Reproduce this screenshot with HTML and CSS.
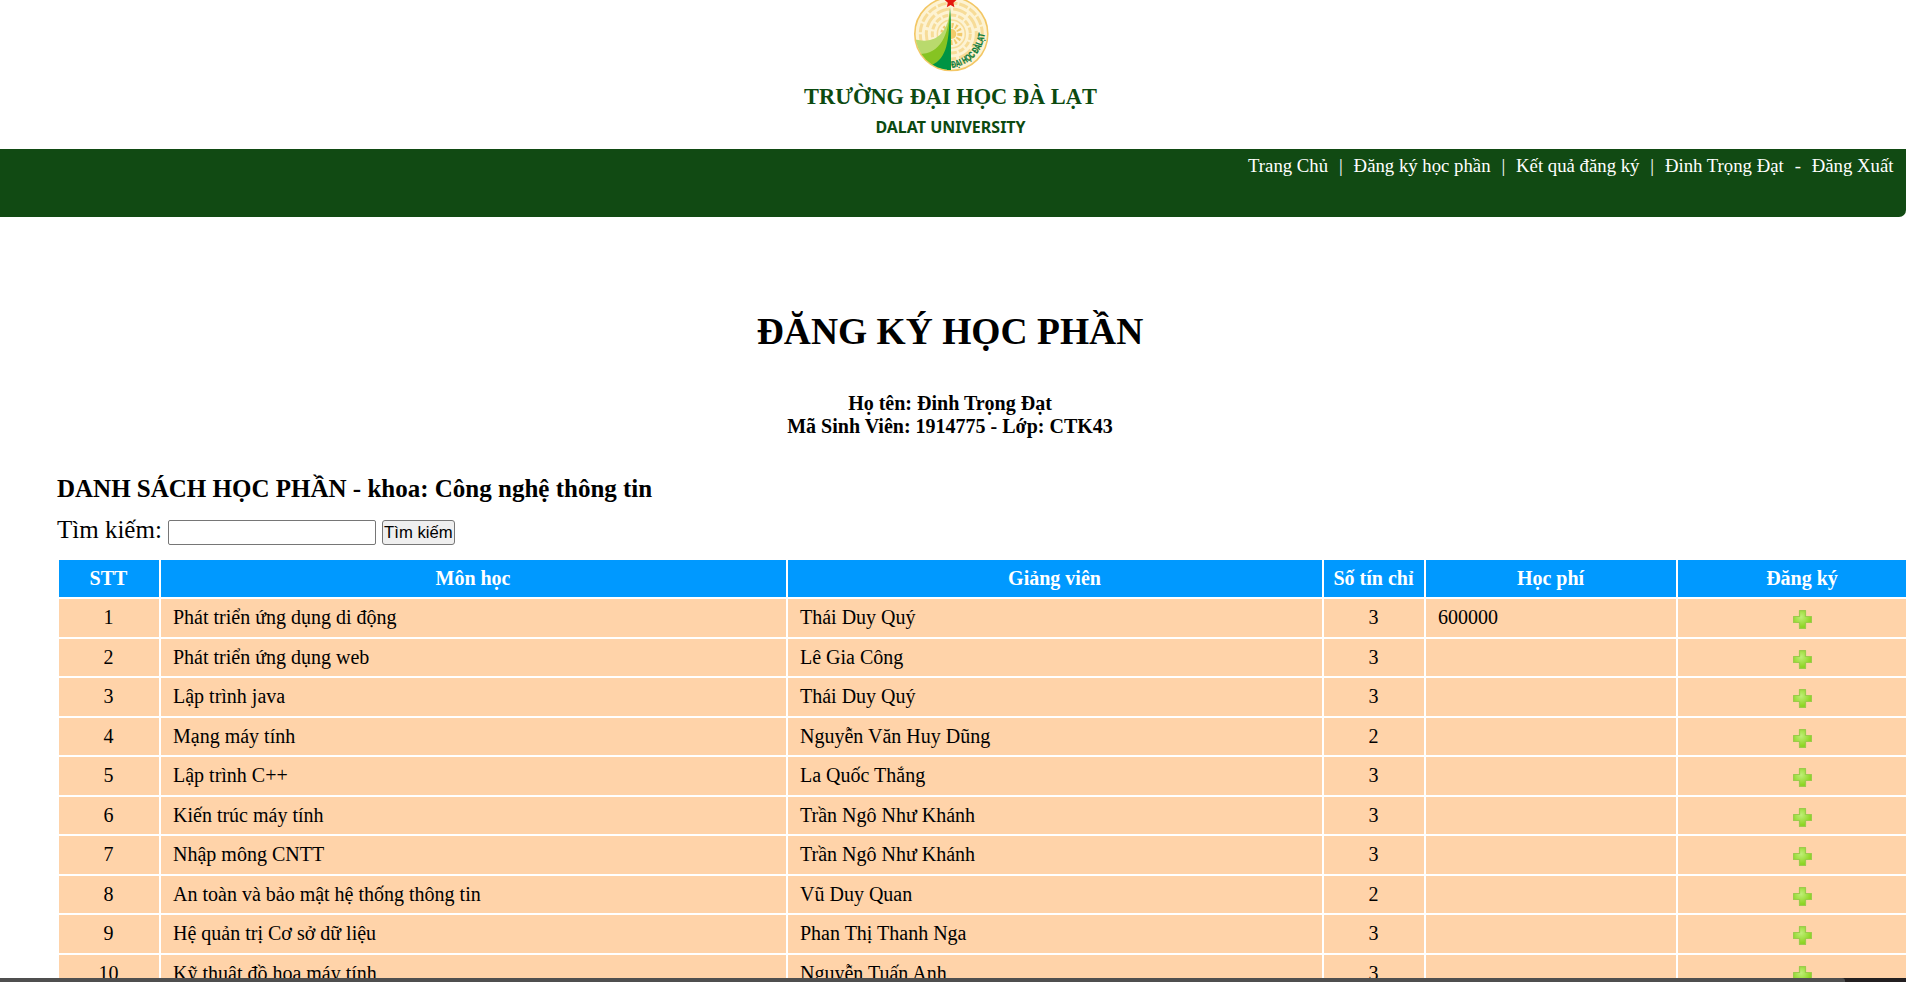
FILE: index.html
```
<!DOCTYPE html>
<html lang="vi">
<head>
<meta charset="utf-8">
<title>Đăng ký học phần</title>
<link rel="stylesheet" href="styles.css">
</head>
<body>
<header class="banner">
  <svg class="logo" width="76" height="72" viewBox="912 0 76 72">
    <defs>
      <clipPath id="disc"><circle cx="950.3" cy="34" r="36"/></clipPath>
      <path id="arc" d="M951 68 C 969 65 983 52 984.5 29"/>
    </defs>
    <circle cx="950.3" cy="34" r="36.5" fill="#fdf3d3" stroke="#f3c765" stroke-width="1.6"/>
    <g fill="none" stroke="#f7dc98">
      <circle cx="950.3" cy="34" r="31" stroke-width="3" stroke-dasharray="9 2"/>
      <circle cx="950.3" cy="34" r="25" stroke-width="3" stroke-dasharray="14 3"/>
      <circle cx="950.3" cy="34" r="19" stroke-width="3" stroke-dasharray="6 2"/>
      <circle cx="950.3" cy="34" r="14" stroke-width="1.5"/>
      <circle cx="950.3" cy="34" r="8.5" stroke="#f2ca6c" stroke-width="5" stroke-dasharray="2 2"/>
    </g>
    <circle cx="950.3" cy="34" r="5" fill="#f3cb6a"/>
    <g clip-path="url(#disc)">
      <path d="M949 8 C948 30 937 46 912 39 V72 H950Z" fill="#b9da6d"/>
      <path d="M949 8 C948 36 939 54 918 54 V72 H950Z" fill="#86c322"/>
      <path d="M949 8 C948 42 946 58 931 65 V72 H950Z" fill="#009444"/>
    </g>
    <path d="M949.6 7 L948 40 L946 70 H950Z" fill="#009444"/>
    <path d="M949.6 -4 l1.7 3.6 4.2 .4 -3.1 2.8 1 4.5 -3.8 -2.4 -3.8 2.4 1 -4.5 -3.1 -2.8 4.2 -.4Z" fill="#e3170d"/>
    <text class="logo-text"><textPath href="#arc" textLength="51" lengthAdjust="spacingAndGlyphs">ĐẠI HỌC ĐÀLẠT</textPath></text>
  </svg>
  <div class="school">TRƯỜNG ĐẠI HỌC ĐÀ LẠT</div>
  <div class="school-en">DALAT UNIVERSITY</div>
</header>
<nav class="menu">
  <a>Trang Chủ</a><span>|</span><a>Đăng ký học phần</a><span>|</span><a>Kết quả đăng ký</a><span>|</span><a>Đinh Trọng Đạt</a><span class="dash">-</span><a>Đăng Xuất</a>
</nav>
<main>
  <h1>ĐĂNG KÝ HỌC PHẦN</h1>
  <div class="student">Họ tên: Đinh Trọng Đạt<br>Mã Sinh Viên: 1914775 - Lớp: CTK43</div>
  <h2>DANH SÁCH HỌC PHẦN - khoa: Công nghệ thông tin</h2>
  <form class="search"><label for="q">Tìm kiếm:</label><input id="q" type="text"><button type="button">Tìm kiếm</button></form>
  <div class="grid" id="courses">
    <div class="th">STT</div><div class="th">Môn học</div><div class="th">Giảng viên</div><div class="th">Số tín chỉ</div><div class="th">Học phí</div><div class="th">Đăng ký</div>
  </div>
</main>
<div class="scrollbar"><div class="thumb"></div></div>
<svg width="0" height="0" class="defs">
  <defs>
    <radialGradient id="green" cx=".42" cy=".36" r=".62"><stop offset="0" stop-color="#c0ee78"/><stop offset="1" stop-color="#88d31a"/></radialGradient>
    <symbol id="plus" viewBox="0 0 19 19"><path d="M6.5 .6h6v5.9h5.9v6h-5.9v5.9h-6v-5.9H.6v-6h5.9Z" fill="url(#green)" stroke="#9ccb4c" stroke-width="1.2" stroke-linejoin="round"/></symbol>
  </defs>
</svg>
<script src="app.js"></script>
</body>
</html>
```
FILE: styles.css
```
html, body { height: 100%; }
body { margin: 0; height: 982px; overflow: hidden; position: relative; background: #fff; color: #000; font-family: "Liberation Serif", "Times New Roman", serif; }
.banner { height: 149px; display: flex; flex-direction: column; align-items: center; padding-right: 5px; box-sizing: border-box; }
.logo { display: block; flex: none; }
.logo-text { font: bold 9.5px "Liberation Sans", Arial, sans-serif; fill: #0b7a3b; stroke: #0b7a3b; stroke-width: .3px; }
.school { margin-top: 11px; font-size: 22.4px; line-height: 28px; font-weight: bold; color: #0c4a10; white-space: nowrap; }
.school-en { margin-top: 6px; font: bold 16px/20px "Noto Sans", sans-serif; color: #0c4a10; white-space: nowrap; }
.menu { height: 68px; box-sizing: border-box; padding: 6px 12.5px 0 0; display: flex; justify-content: flex-end; align-items: flex-start; background: #114a13; border-bottom-right-radius: 7px; color: #fff; font-size: 18.75px; line-height: 22px; white-space: nowrap; }
.menu span { width: 25.5px; text-align: center; }
.menu .dash { width: 28px; }
main { padding-left: 57px; }
h1 { margin: 92px 0 0 -57px; padding-right: 6px; text-align: center; font-size: 37.5px; line-height: 46px; }
.student { margin: 37px 0 0 -57px; padding-right: 6px; text-align: center; font-weight: bold; font-size: 20px; line-height: 23px; }
h2 { margin: 36px 0 0; font-size: 25px; line-height: 30px; }
.search { display: flex; height: 34px; margin: 12px 0 10px; align-items: flex-start; font-size: 25px; line-height: 28px; }
.search input { box-sizing: border-box; width: 208px; height: 25px; margin: 4px 6px 0; border: 1px solid #767676; border-radius: 2px; }
.search button { box-sizing: border-box; width: 73px; height: 25px; margin-top: 4px; padding: 0; border: 1px solid #767676; border-radius: 3px; background: #efefef; color: #000; font: 16.67px "Liberation Sans", Arial, sans-serif; white-space: nowrap; }
.grid { margin-left: 2px; display: grid; grid-template-columns: 100px 625px 534px 100px 250px 249px; grid-template-rows: 37px; grid-auto-rows: 37.5px; gap: 2px; font-size: 20px; line-height: 37px; white-space: nowrap; }
.th { background: #09f; color: #fff; font-weight: bold; text-align: center; padding-right: 1px; }
.td { background: #ffd3a9; padding-left: 12px; }
.td.mid { padding: 0 1px 0 0; text-align: center; }
.plus { display: block; width: 19px; height: 19px; margin: 11px auto 0; }
.scrollbar { position: absolute; left: 0; right: 0; bottom: 0; height: 4px; background: #231f20; }
.thumb { width: 1845px; height: 4px; background: #4f4f4f; border-top-right-radius: 3px; }
.defs { position: absolute; }
```
FILE: app.js
```
const courses = [
  ["Phát triển ứng dụng di động", "Thái Duy Quý", 3, "600000"],
  ["Phát triển ứng dụng web", "Lê Gia Công", 3, ""],
  ["Lập trình java", "Thái Duy Quý", 3, ""],
  ["Mạng máy tính", "Nguyễn Văn Huy Dũng", 2, ""],
  ["Lập trình C++", "La Quốc Thắng", 3, ""],
  ["Kiến trúc máy tính", "Trần Ngô Như Khánh", 3, ""],
  ["Nhập mông CNTT", "Trần Ngô Như Khánh", 3, ""],
  ["An toàn và bảo mật hệ thống thông tin", "Vũ Duy Quan", 2, ""],
  ["Hệ quản trị Cơ sở dữ liệu", "Phan Thị Thanh Nga", 3, ""],
  ["Kỹ thuật đồ họa máy tính", "Nguyễn Tuấn Anh", 3, ""]
];
document.getElementById("courses").insertAdjacentHTML("beforeend", courses.map((c, i) =>
  `<div class="td mid">${i + 1}</div><div class="td">${c[0]}</div><div class="td">${c[1]}</div><div class="td mid">${c[2]}</div><div class="td">${c[3]}</div><div class="td mid"><svg class="plus"><use href="#plus"/></svg></div>`
).join(""));
```
